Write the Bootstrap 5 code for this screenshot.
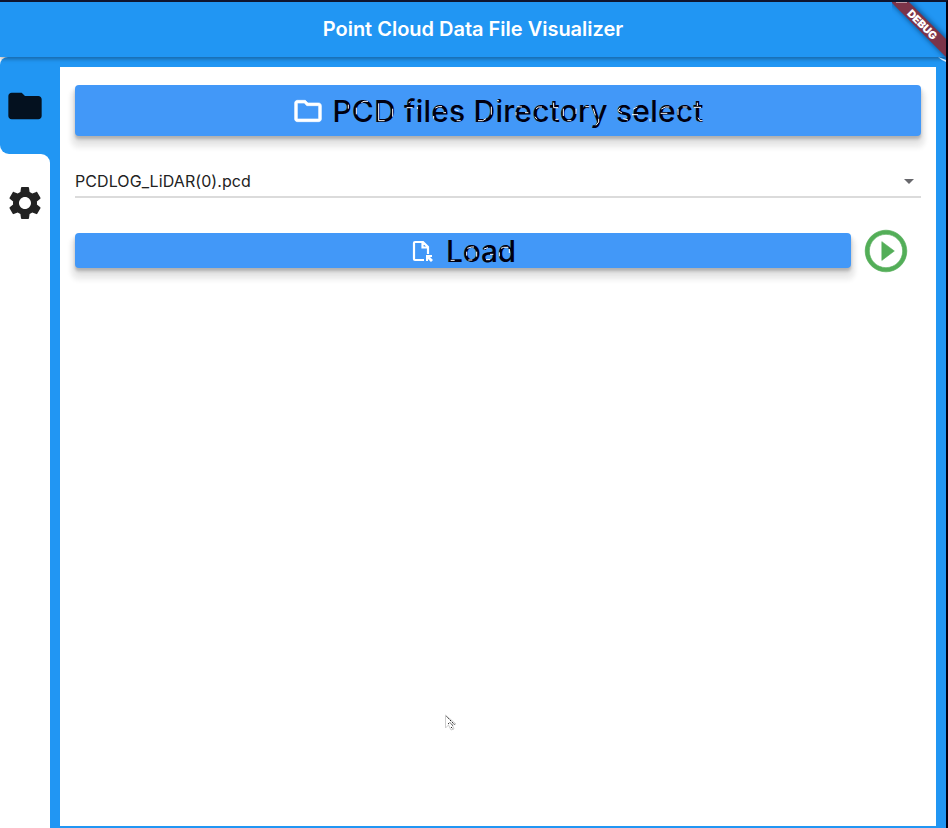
<!DOCTYPE html>
<html lang="en">
<head>
<meta charset="utf-8">
<meta name="viewport" content="width=device-width, initial-scale=1">
<title>Point Cloud Data File Visualizer</title>
<link rel="stylesheet" href="https://cdn.jsdelivr.net/npm/bootstrap@5.3.0/dist/css/bootstrap.min.css">
<style>
:root{--blue:#2196f3}
body{font-family:Inter,Roboto,sans-serif;background:#000014}
.window{height:828px;border-top:2px solid #101630;border-right:2px solid #000014;background:var(--blue)}
.appbar{height:55px;flex:none;color:#fff;font-size:20px;font-weight:600;letter-spacing:-.01px;box-shadow:0 2px 4px rgba(0,0,0,.32);z-index:2}
.appbar h1{font:inherit;line-height:24px;margin:0 0 2px}
.ribbon-svg{right:0;top:0;z-index:3}
.rail{width:50px;flex:none;background:#fff}
.tab-active{height:97px;flex:none;background:var(--blue);border-radius:8px 0 0 9px}
.rail-rest{background:#fff;border-top-right-radius:9px;padding-top:29px}
.rail-wrap{background:var(--blue)}
.panel{margin:10px 10px 2px 10px;background:#fff;padding:18px 15px 0}
.action{background:#4298f8;border:0;border-radius:4px;color:#000010;font-size:30px;font-weight:500;line-height:1;box-shadow:0 3px 3px rgba(0,0,0,.2),0 6px 6px 1px rgba(0,0,0,.09),0 8px 4px 5px rgba(0,0,0,.05)}
.dir{height:51px;letter-spacing:.19px}
.load{width:776px;height:35px;letter-spacing:-.3px}
.file-select{height:33px;margin-top:29px;border-bottom:2px solid #dbdbdb;color:#222;font-size:16px;letter-spacing:.08px;line-height:32px}
.load-row{margin-top:28px;height:49px}
.play{margin-left:10px}
.flecks{left:0;top:0;pointer-events:none}
.pointer{left:444px;top:712px;z-index:4}
</style>
<script src="https://cdn.jsdelivr.net/npm/bootstrap@5.3.0/dist/js/bootstrap.bundle.min.js"></script>
</head>
<body class="overflow-hidden">
<div class="window d-flex flex-column position-relative">
  <header class="appbar d-flex align-items-center justify-content-center position-relative">
    <h1>Point Cloud Data File Visualizer</h1>
  </header>
  <svg class="ribbon-svg position-absolute" width="54" height="60" viewBox="892 2 54 60">
    <defs><filter id="rs" x="-20%" y="-20%" width="140%" height="140%"><feGaussianBlur stdDeviation="2"/></filter></defs>
    <path d="M889 2H912L948 38V61Z" fill="#003a70" opacity=".55" filter="url(#rs)"/>
    <path d="M891 2H909L946 39V57Z" fill="#7c3449"/>
    <path d="M896 2H907" stroke="#fff" stroke-width="1"/>
    <path d="M938 57L946 60V62L942 60Z" fill="#d5ebff"/>
    <text transform="translate(921.6 25.3) rotate(45)" text-anchor="middle" dominant-baseline="middle" font-family="Inter,sans-serif" font-size="10.8" font-weight="900" fill="#fff" textLength="37">DEBUG</text>
  </svg>
  <div class="d-flex flex-grow-1">
    <nav class="rail d-flex flex-column">
      <a class="tab-active d-flex align-items-center justify-content-center" href="#" aria-label="Files">
        <svg width="40" height="40" viewBox="0 0 24 24" fill="#04111f"><path d="M10 4H4c-1.1 0-1.99.9-1.99 2L2 18c0 1.1.9 2 2 2h16c1.1 0 2-.9 2-2V8c0-1.1-.9-2-2-2h-8l-2-2z"/></svg>
      </a>
      <div class="rail-wrap flex-grow-1 d-flex">
        <a class="rail-rest flex-grow-1 d-flex align-items-start justify-content-center" href="#" aria-label="Settings">
          <svg width="40" height="40" viewBox="0 0 24 24" fill="#222"><path d="M19.14 12.94c.04-.3.06-.61.06-.94 0-.32-.02-.64-.07-.94l2.03-1.58c.18-.14.23-.41.12-.61l-1.92-3.32c-.12-.22-.37-.29-.59-.22l-2.39.96c-.5-.38-1.03-.7-1.62-.94l-.36-2.54c-.04-.24-.24-.41-.48-.41h-3.84c-.24 0-.43.17-.47.41l-.36 2.54c-.59.24-1.13.57-1.62.94l-2.39-.96c-.22-.08-.47 0-.59.22L2.74 8.87c-.12.21-.08.47.12.61l2.03 1.58c-.05.3-.09.63-.09.94s.02.64.07.94l-2.03 1.58c-.18.14-.23.41-.12.61l1.92 3.32c.12.22.37.29.59.22l2.39-.96c.5.38 1.03.7 1.62.94l.36 2.54c.05.24.24.41.48.41h3.84c.24 0 .44-.17.47-.41l.36-2.54c.59-.24 1.13-.56 1.62-.94l2.39.96c.22.08.47 0 .59-.22l1.92-3.32c.12-.22.07-.47-.12-.61l-2.01-1.58zM12 15.6c-1.98 0-3.6-1.62-3.6-3.6s1.62-3.6 3.6-3.6 3.6 1.62 3.6 3.6-1.62 3.6-3.6 3.6z"/></svg>
        </a>
      </div>
    </nav>
    <main class="panel flex-grow-1">
      <button class="action dir w-100 d-flex align-items-center justify-content-center position-relative p-0">
        <svg class="me-2" width="32" height="32" viewBox="0 0 24 24" fill="#fff" stroke="#fff" stroke-width=".5"><path d="M9.17 6l2 2H20v10H4V6h5.17M10 4H4c-1.1 0-1.99.9-1.99 2L2 18c0 1.1.9 2 2 2h16c1.1 0 2-.9 2-2V8c0-1.1-.9-2-2-2h-8l-2-2z"/></svg>
        <span>PCD files Directory select</span>
        <svg class="flecks position-absolute" width="846" height="51" viewBox="-615 27 2538 153" fill="none" stroke="#fff" stroke-width="3"><path d="M205 86v12M229 95v20M244 80l8-4h12M296 82v52h18M338 98v24M380 95h18M386 80l6-3M412 93v6M466 96l10-4h10M461 120v8M490 110h8M524 101l12 4M530 134h12M594 134h14l10-6M634 92v24M651 74h6M712 92l14 1M708 108v10M735 110h10M768 98l8-5h10M765 122l6 8M821 80v15h14M826 130h10M850 98v22M862 134h12M888 98v16M916 92h12M940 98l6 20M956 128v10l-8 10M1020 95l-6 9 12 7M1030 128l14 4M1060 99l12-6M1056 116h18M1110 128v8M1144 99l12-6h12M1142 112h20M1194 99v18M1208 93h14M1241 94h22M1252 80v10M1254 125l6 9h8"/></svg>
      </button>
      <div class="file-select d-flex justify-content-between align-items-center" role="combobox" aria-label="PCD file">
        <span>PCDLOG_LiDAR(0).pcd</span>
        <svg width="24" height="24" viewBox="0 0 24 24" fill="#68686c"><path d="M7 10l5 5 5-5z"/></svg>
      </div>
      <div class="load-row d-flex align-items-center">
        <button class="action load d-flex align-items-center justify-content-center position-relative p-0">
          <svg class="me-2" width="24" height="24" viewBox="0 0 24 24" fill="none" stroke="#fff" stroke-width="2.2"><path d="M14 21H5Q4 21 4 20V4Q4 3 5 3H13L18 8V15M12.5 3V8.5H18"/><path d="M16 16h6v2h-2l3 3-2 2-3-3v2h-2z" fill="#fff" stroke="none"/></svg>
          <span class="ms-1">Load</span>
          <svg class="flecks position-absolute" width="776" height="35" viewBox="-975 24 2328 105" fill="none" stroke="#fff" stroke-width="3"><path d="M152 106h12M202 70l12-4h8M200 80v12M230 80v15M205 105h12M252 72l12-4M270 88h10M258 104h12M303 70l8-3h14M298 82v12M328 72v12"/></svg>
        </button>
        <svg class="play" width="50" height="50" viewBox="0 0 24 24" fill="#53ae58" stroke="#53ae58" stroke-width=".3"><path d="M10 16.5l6-4.5-6-4.5v9zM12 2C6.48 2 2 6.48 2 12s4.48 10 10 10 10-4.48 10-10S17.520 2 12 2zm0 18c-4.410 0-8-3.590-8-8s3.590-8 8-8 8 3.590 8 8-3.590 8-8 8z"/></svg>
      </div>
    </main>
  </div>
  <svg class="pointer position-absolute" width="14" height="18" viewBox="0 0 14 18" fill="none"><path d="M1.5 1v13l3-3 2.500 5 3-1-2-5h4z" fill="#fff" stroke="#ccc"/><path d="M2.500 2.500l8 8M4 10l2-1.500 3 3.500M7 13l2 2" stroke="#222" stroke-dasharray="1.500 1"/></svg>
</div>
</body>
</html>
